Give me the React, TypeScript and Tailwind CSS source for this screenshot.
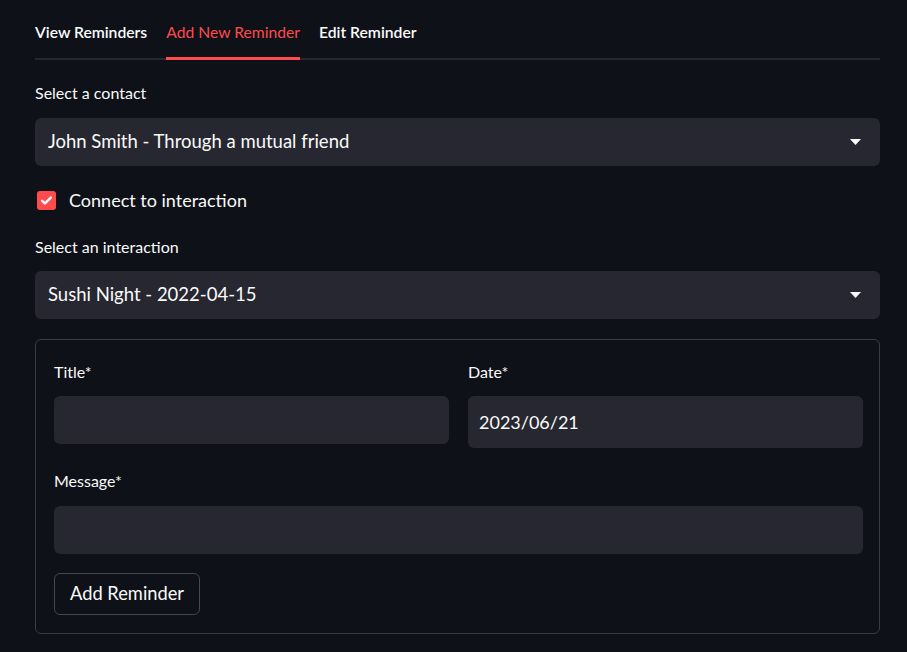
import React from 'react';

const font = { fontFamily: 'Lato, "Noto Sans", sans-serif' };

const tabs = ['View Reminders', 'Add New Reminder', 'Edit Reminder'];

const Caret = () => (
  <svg width="11" height="6" viewBox="0 0 11 6" className="fill-[#fafafa]">
    <path d="M0 0h11L5.5 6z" />
  </svg>
);

const SelectBox = ({ value }: { value: string }) => (
  <div className="h-[48px] w-full rounded-[6px] bg-[#262730] pl-[13px] pr-[19px] flex items-center justify-between">
    <span className="text-[18.5px] text-[#fafafa]">{value}</span>
    <Caret />
  </div>
);

const Label = ({ children }: { children: React.ReactNode }) => (
  <div className="text-[16px] leading-[20px] text-[#fafafa]">{children}</div>
);

export default function App() {
  return (
    <div className="min-h-screen w-full bg-[#0e1117]" style={font}>
      <div className="ml-[35px] w-[845px] pt-[22px]">
        <div className="flex gap-[19px] border-b-2 border-[#262730]">
          {tabs.map((t) => (
            <div
              key={t}
              className={
                t === 'Add New Reminder'
                  ? 'text-[15.7px] leading-[20px] pb-[15px] -mb-[2px] border-b-[3px] border-[#ff4b4b] text-[#ff4b4b]'
                  : 'text-[15.7px] leading-[20px] pb-[15px] font-semibold text-[#fafafa]'
              }
            >
              {t}
            </div>
          ))}
        </div>

        <div className="mt-[23px]">
          <Label>Select a contact</Label>
        </div>
        <div className="mt-[15px]">
          <SelectBox value="John Smith - Through a mutual friend" />
        </div>

        <div className="mt-[24px] h-[20px] flex items-center gap-[13px] pl-[2px]">
          <div className="w-[19px] h-[19px] rounded-[3px] bg-[#ff4b4b] flex items-center justify-center">
            <svg width="13" height="13" viewBox="0 0 24 24" fill="none" stroke="#fff" strokeWidth="4.5" strokeLinecap="round" strokeLinejoin="round">
              <path d="M4 12.5l5 5L20 6.5" />
            </svg>
          </div>
          <span className="text-[18px] text-[#fafafa]">Connect to interaction</span>
        </div>

        <div className="mt-[27px]">
          <Label>Select an interaction</Label>
        </div>
        <div className="mt-[14px]">
          <SelectBox value="Sushi Night - 2022-04-15" />
        </div>

        <div className="mt-[20px] rounded-[6px] border border-[#3b3d45] pl-[18px] pr-[16px] pt-[22px] pb-[18px]">
          <div className="grid grid-cols-2 gap-x-[19px] items-start">
            <div>
              <Label>Title*</Label>
              <div className="mt-[14px] h-[48px] rounded-[6px] bg-[#262730]" />
            </div>
            <div>
              <Label>Date*</Label>
              <div className="mt-[14px] h-[52px] rounded-[6px] bg-[#262730] pl-[11px] flex items-center">
                <span className="text-[18px] text-[#fafafa]">2023/06/21</span>
              </div>
            </div>
          </div>

          <div className="mt-[23px]">
            <Label>Message*</Label>
          </div>
          <div className="mt-[15px] h-[48px] rounded-[6px] bg-[#262730]" />

          <button className="mt-[19px] h-[42px] px-[15px] rounded-[6px] border border-[#45464f] bg-[#0e1117] text-[18.3px] text-[#fafafa] flex items-center">
            Add Reminder
          </button>
        </div>
      </div>
    </div>
  );
}
